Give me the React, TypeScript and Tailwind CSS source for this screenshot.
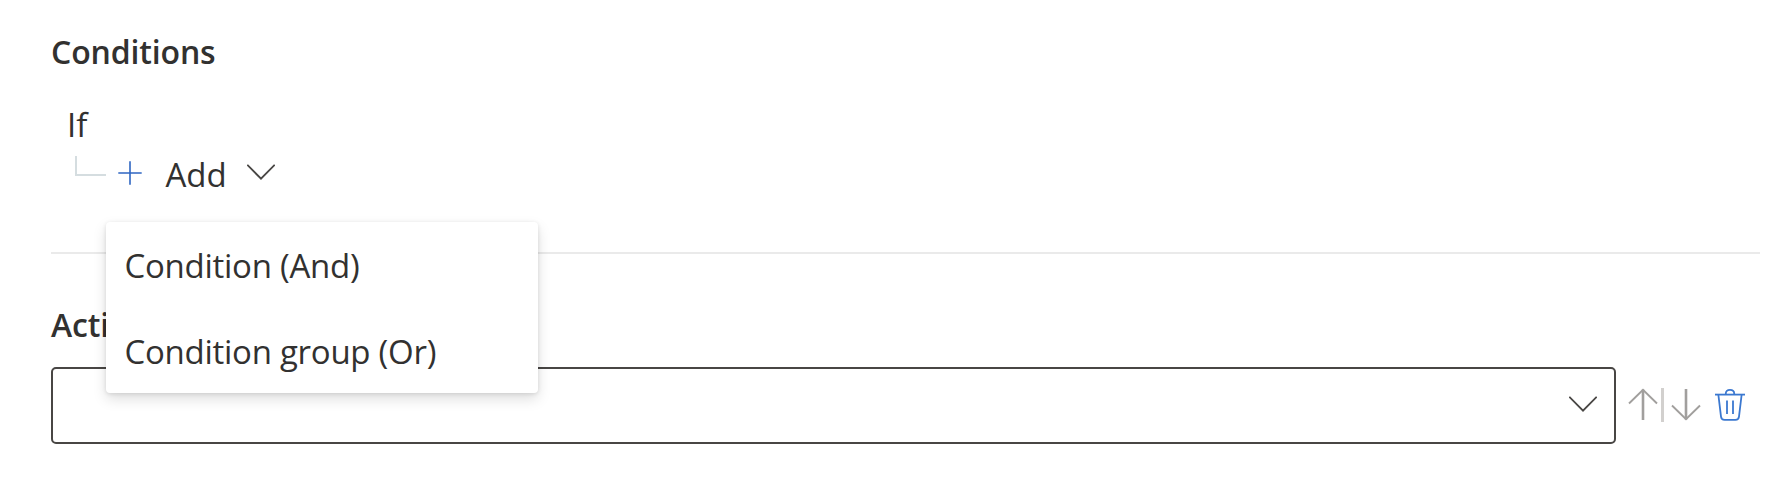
type IconProps = { className?: string };

function ChevronDown({ className }: IconProps) {
  return (
    <svg viewBox="0 0 28 16" fill="none" stroke="#484644" strokeWidth="1.9" className={`h-4 w-7 shrink-0 ${className ?? ''}`}>
      <path d="M0.3 0.8 L14 14.6 L27.7 0.8" />
    </svg>
  );
}

function PlusIcon() {
  return (
    <svg viewBox="0 0 24 24" fill="none" stroke="#2f66c2" strokeWidth="1.6" className="mb-[5px] ml-[11.5px] size-6 shrink-0">
      <path d="M12 0.3 V23.7 M0.3 12 H23.7" />
    </svg>
  );
}

function ArrowIcon({ className }: IconProps) {
  return (
    <svg viewBox="0 0 30 32" fill="none" stroke="#a19f9d" className={`h-8 w-[30px] shrink-0 ${className ?? ''}`}>
      <path d="M15 1.5 V32" strokeWidth="2.6" />
      <path d="M1 15.5 L15 1.8 L29 15.5" strokeWidth="1.9" />
    </svg>
  );
}

function TrashIcon() {
  return (
    <svg viewBox="0 0 32 34" fill="none" stroke="#3b78d0" strokeWidth="1.8" className="mb-px ml-[13px] h-[34px] w-8 shrink-0">
      <path d="M1 6.6 H31" />
      <path d="M11.8 6.4 V5.6 C11.8 3.3 13.2 1.9 16 1.9 C18.8 1.9 20.2 3.3 20.2 5.6 V6.4" />
      <path d="M4.4 7 L7 28.6 C7.3 31 8.6 31.9 10.6 31.9 H21.4 C23.4 31.9 24.7 31 25 28.6 L27.6 7" />
      <path d="M13 12.6 V26 M19 12.6 V26" />
    </svg>
  );
}

const menuItems = ['Condition (And)', 'Condition group (Or)'];

export default function App() {
  return (
    <main className="h-[480px] w-full bg-white pt-[30px] pr-[31px] pl-[51px] font-['Open_Sans','Noto_Sans',sans-serif] text-[33px] leading-[44px] text-[#323130]">
      <section>
        <h2 className="text-[32px] font-semibold tracking-[-0.15px]">Conditions</h2>
        <div className="mt-[29px] pl-4">If</div>
        <div className="relative mt-1.5 flex h-11 items-center pl-6">
          <span className="mt-[3px] h-5 w-[31px] shrink-0 self-start border-b-2 border-l-2 border-[#d5dde0]" />
          <PlusIcon />
          <button className="ml-6 flex items-center">
            <span>Add</span>
            <ChevronDown className="mb-[7px] ml-[20px]" />
          </button>
          <ul className="absolute top-[69px] left-[55px] z-10 h-[171px] w-[432px] rounded bg-white shadow-[0_6px_14px_rgba(0,0,0,0.13),0_1px_4px_rgba(0,0,0,0.11)]">
            {menuItems.map((item) => (
              <li key={item} className="flex h-[86px] items-center pt-0.5 pl-[18.5px] tracking-[-0.27px] whitespace-nowrap">
                {item}
              </li>
            ))}
          </ul>
        </div>
      </section>
      <hr className="mt-[55px] border-0 border-t-2 border-[#eaeaea]" />
      <section className="pt-[49px]">
        <h2 className="text-[32px] font-semibold tracking-[-0.15px]">Actions</h2>
        <div className="mt-5 flex items-center">
          <div className="flex h-[77px] w-[1565px] items-center justify-end rounded-[5px] border-2 border-[#484644] pr-[17px]">
            <ChevronDown className="mb-[3px]" />
          </div>
          <ArrowIcon className="mb-[3px] ml-[11.5px]" />
          <span className="mb-px ml-[3.5px] h-[34px] w-[3px] bg-[#d2d0ce]" />
          <ArrowIcon className="mb-px ml-[7px] rotate-180" />
          <TrashIcon />
        </div>
      </section>
    </main>
  );
}
